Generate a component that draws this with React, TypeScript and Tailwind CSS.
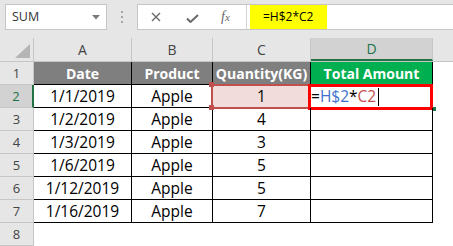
import React from "react";

const data: [string, string, string][] = [
  ["1/1/2019", "Apple", "1"],
  ["1/2/2019", "Apple", "4"],
  ["1/3/2019", "Apple", "3"],
  ["1/6/2019", "Apple", "5"],
  ["1/12/2019", "Apple", "5"],
  ["1/16/2019", "Apple", "7"],
];

function RowHeader({ n, selected }: { n: number; selected?: boolean }) {
  return (
    <div
      className={
        selected
          ? "w-[34px] h-[23px] shrink-0 bg-[#d2d2d2] border-b border-b-[#c6c6c6] border-r-2 border-r-[#217346] flex items-center justify-center text-[13px] leading-[22px] text-[#217346]"
          : "w-[34px] h-[23px] shrink-0 bg-[#e6e6e6] border-b border-r border-[#c6c6c6] flex items-center justify-center text-[13px] leading-[22px] text-[#444]"
      }
    >
      {n}
    </div>
  );
}

export default function App() {
  return (
    <div className="w-[453px] h-[246px] overflow-hidden bg-white font-['Open_Sans',sans-serif] text-black">
      {/* Formula bar area */}
      <div className="h-[38px] bg-[#e6e6e6] flex items-start pt-[4px]">
        <div className="ml-[5px] w-[102px] h-[26px] bg-white border border-[#c6c6c6] flex items-center justify-between pl-[6px] pr-[6px]">
          <span className="text-[12.5px] text-[#333] leading-none">SUM</span>
          <svg width="8" height="5" viewBox="0 0 8 5">
            <path d="M0 0h8L4 4.5z" fill="#7a7a7a" />
          </svg>
        </div>
        <div className="w-[30px] h-[26px] flex flex-col items-center justify-center gap-[3px]">
          <div className="w-[2px] h-[2px] bg-[#a6a6a6]" />
          <div className="w-[2px] h-[2px] bg-[#a6a6a6]" />
          <div className="w-[2px] h-[2px] bg-[#a6a6a6]" />
        </div>
        <div className="flex-1 h-[26px] bg-white border border-r-0 border-[#c6c6c6] flex">
          <div className="w-[109px] h-full border-r border-[#d4d4d4] flex items-center">
            <svg className="ml-[13px]" width="10" height="10" viewBox="0 0 10 10">
              <path d="M1 1L9 9M9 1L1 9" stroke="#6a6a6a" strokeWidth="1.4" />
            </svg>
            <svg className="ml-[25px] mt-[3px]" width="13" height="9" viewBox="0 0 13 9">
              <path d="M1 4.5L4.5 8L12 1" stroke="#6a6a6a" strokeWidth="2" fill="none" />
            </svg>
            <span className="ml-[22px] font-['Liberation_Serif',serif] italic text-[14px] text-[#666] leading-none">
              f<span className="text-[11px]">x</span>
            </span>
          </div>
          <div className="ml-[3px] w-[77px] h-full bg-[#ffff00] flex items-center pl-[13px] text-[12px] leading-none text-black">
            =H$2*C2
          </div>
        </div>
      </div>

      {/* Column headers */}
      <div className="h-[24px] flex bg-[#e6e6e6] border-b border-[#c6c6c6]">
        <div className="w-[34px] shrink-0 border-r border-[#c6c6c6] relative">
          <svg className="absolute left-[15px] top-[6px]" width="16" height="15" viewBox="0 0 16 15">
            <path d="M15 0V14H0z" fill="#b4b4b4" />
          </svg>
        </div>
        <div className="w-[98px] shrink-0 border-r border-[#c6c6c6] flex items-center justify-center text-[14px] text-[#444]">A</div>
        <div className="w-[81px] shrink-0 border-r border-[#c6c6c6] flex items-center justify-center text-[14px] text-[#444]">B</div>
        <div className="w-[98px] shrink-0 border-r border-[#c6c6c6] flex items-center justify-center text-[14px] text-[#444]">C</div>
        <div className="w-[122px] shrink-0 border-r border-[#c6c6c6] bg-[#d2d2d2] border-b-2 border-b-[#217346] flex items-center justify-center text-[14px] text-[#217346]">D</div>
        <div className="flex-1" />
      </div>

      {/* Row 1: table header */}
      <div className="h-[23px] flex">
        <RowHeader n={1} />
        <div className="w-[98px] shrink-0 bg-[#7f7f7f] border-r border-b border-black flex justify-center pt-[2px] text-[14px] font-bold leading-[20px] text-white">Date</div>
        <div className="w-[81px] shrink-0 bg-[#7f7f7f] border-r border-b border-black flex justify-center pt-[2px] text-[14px] font-bold leading-[20px] text-white">Product</div>
        <div className="w-[98px] shrink-0 bg-[#7f7f7f] border-r border-b border-black flex justify-center pt-[2px] text-[14px] font-bold leading-[20px] text-white whitespace-nowrap">Quantity(KG)</div>
        <div className="w-[122px] shrink-0 bg-[#00b050] border-r border-b border-black flex justify-center pt-[2px] text-[14px] font-bold leading-[20px] text-white">Total Amount</div>
      </div>

      {data.map((r, i) => {
        const sel = i === 0;
        return (
          <div key={i} className="h-[23px] flex">
            <RowHeader n={i + 2} selected={sel} />
            <div className="w-[98px] shrink-0 border-r border-b border-black flex justify-center pt-[1px] text-[15.5px] leading-[21px]">{r[0]}</div>
            <div className="w-[81px] shrink-0 border-r border-b border-black flex justify-center pt-[1px] text-[15.5px] leading-[21px]">{r[1]}</div>
            <div className={"w-[98px] shrink-0 border-r border-b border-black flex justify-center pt-[1px] text-[15.5px] leading-[21px] relative " + (sel ? "bg-[#f2dcdb]" : "")}>
              {r[2]}
              {sel && (
                <>
                  <div className="absolute left-[-2px] top-[-1px] w-[100px] h-[25px] border-2 border-[#c0504d]" />
                  <div className="absolute left-[-4px] top-[-3px] w-[5px] h-[5px] bg-[#c0504d]" />
                  <div className="absolute left-[-4px] top-[20px] w-[5px] h-[5px] bg-[#c0504d]" />
                </>
              )}
            </div>
            <div className="w-[122px] shrink-0 border-r border-b border-black relative">
              {sel && (
                <>
                  <div className="absolute left-[122px] top-[22px] w-[3px] h-[4px] bg-[#217346]" />
                  <div className="absolute left-[-3px] top-[-1px] w-[125px] h-[26px] border-[3px] border-[#ff0000]" />
                  <div className="absolute left-0 top-[1px] flex items-center text-[15.5px] leading-[21px] whitespace-nowrap">
                    <span>=</span>
                    <span className="text-[#3f72cc]">H$2</span>
                    <span>*</span>
                    <span className="text-[#c0504d]">C2</span>
                    <span className="ml-[2px] w-px h-[18px] bg-black" />
                  </div>
                </>
              )}
            </div>
          </div>
        );
      })}

      <div className="h-[23px] flex">
        <RowHeader n={8} />
      </div>
    </div>
  );
}
